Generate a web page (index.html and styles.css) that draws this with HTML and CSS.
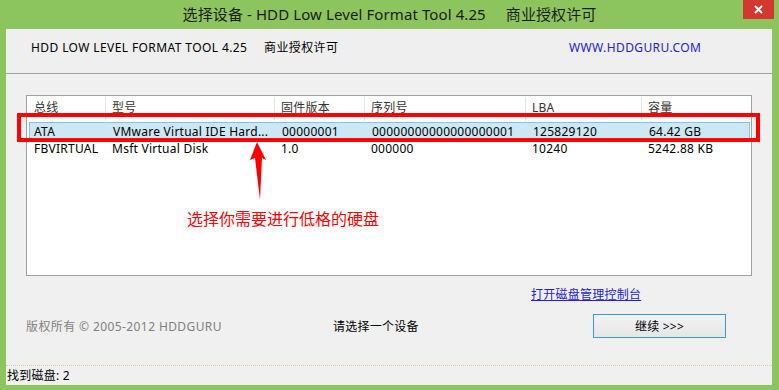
FILE: index.html
```html
<!DOCTYPE html>
<html lang="zh-CN">
<head>
	<meta charset="UTF-8">
	<title>选择设备 - HDD Low Level Format Tool 4.25</title>
	<link rel="stylesheet" href="styles.css">
</head>
<body>
<div class="titlebar">
	<span class="title">选择设备 - HDD Low Level Format Tool 4.25&nbsp;&nbsp;&nbsp;&nbsp;&nbsp;商业授权许可</span>
	<span class="close">
		<svg width="9" height="9" viewBox="0 0 9 9"><path d="M1 1L8 8M8 1L1 8" stroke="#fff" stroke-width="2"/></svg>
	</span>
</div>
<div class="window">
	<div class="header">
		<span>HDD LOW LEVEL FORMAT TOOL 4.25</span>
		<span>商业授权许可</span>
		<a class="site" href="#">WWW.HDDGURU.COM</a>
	</div>
	<div class="main">
		<div class="list">
			<div class="row head">
				<span>总线</span><span>型号</span><span>固件版本</span><span>序列号</span><span>LBA</span><span>容量</span>
			</div>
			<div class="row selected">
				<span>ATA</span><span>VMware Virtual IDE Hard...</span><span>00000001</span><span>00000000000000000001</span><span>125829120</span><span>64.42 GB</span>
			</div>
			<div class="row">
				<span>FBVIRTUAL</span><span>Msft Virtual Disk</span><span>1.0</span><span>000000</span><span>10240</span><span>5242.88 KB</span>
			</div>
		</div>
		<div class="linkrow"><a href="#">打开磁盘管理控制台</a></div>
		<div class="footer">
			<span class="copy">版权所有 © 2005-2012 HDDGURU</span>
			<span>请选择一个设备</span>
			<button class="next">继续 &gt;&gt;&gt;</button>
		</div>
	</div>
	<div class="status">找到磁盘: 2</div>

	<!-- annotation -->
	<div class="mark"></div>
	<svg class="arrow" width="24" height="60" viewBox="0 0 24 60">
		<polygon points="7,1 16,19 12,17 10,59 5,17 0,19" fill="#f00"/>
	</svg>
	<div class="note">选择你需要进行低格的硬盘</div>
</div>
</body>
</html>
```

FILE: styles.css
```css
* {
	margin: 0;
	padding: 0;
	box-sizing: border-box;
}

body {
	width: 779px;
	height: 390px;
	background: #8cc55d;
	font-family: "Noto Sans", "Noto Sans CJK SC", sans-serif;
	font-size: 12px;
	letter-spacing: 0.25px;
	color: #000;
	overflow: hidden;
}

a {
	color: #2222dd;
	text-decoration: none;
}

.titlebar {
	height: 29px;
	display: grid;
	grid-template-columns: 1fr auto 1fr;
}

.title {
	grid-column: 2;
	font-size: 15px;
	letter-spacing: 0.1px;
	line-height: 28px;
	color: #1c1c1c;
	white-space: nowrap;
}

.close {
	grid-column: 3;
	justify-self: end;
	width: 31px;
	height: 19px;
	margin-right: 5px;
	background: #d3382e;
	display: flex;
	align-items: center;
	justify-content: center;
}

.window {
	position: relative;
	margin-left: 6px;
	width: 766px;
	height: 356px;
	background: #f0f0f0;
	display: flex;
	flex-direction: column;
}

.header {
	height: 45px;
	padding: 11px 0 0 25px;
	line-height: 16px;
	letter-spacing: 0.4px;
	background: #efefef;
	border-bottom: 1px solid #a0a0a0;
	display: grid;
	grid-template-columns: 233px 305px auto;
	align-items: start;
}

.main {
	flex: 1;
	padding: 21px 20px 0 20px;
}

.list {
	height: 181px;
	background: #fff;
	border: 1px solid #a0a0a0;
	padding-top: 1px;
}

.row {
	display: grid;
	grid-template-columns: 77px 169px 90px 161px 116px 1fr;
	margin: 0 1px 0 2px;
	height: 18px;
	line-height: 18px;
	white-space: nowrap;
}

.row span {
	padding-left: 6px;
	overflow: hidden;
}

.row span:first-child {
	padding-left: 5px;
}

.row.head {
	height: 24px;
	line-height: 22px;
	color: #333;
	margin-bottom: 1px;
}

.row.head span {
	border-right: 1px solid #e5e5e5;
}

.row.head span:last-child {
	border-right: 0;
}

.row.selected {
	background: #cce8f4;
	border: 1px solid #84c3e3;
}

.row.selected span:first-child {
	padding-left: 4px;
}

.linkrow {
	margin-top: 11px;
	padding-left: 505px;
	line-height: 16px;
}

.linkrow a {
	text-decoration: underline;
}

.footer {
	margin-top: 11px;
	display: grid;
	grid-template-columns: 307px 260px 133px;
	align-items: center;
}

.copy {
	color: #808080;
	letter-spacing: 0.4px;
}

.next {
	height: 24px;
	border: 1px solid #3a9ae0;
	background: linear-gradient(#f2f2f2, #e6e6e6);
	font-family: inherit;
	font-size: 12px;
	letter-spacing: 0.25px;
	color: #000;
}

.status {
	height: 20px;
	border-top: 1px dotted #e6c8a0;
	padding-left: 1px;
	line-height: 19px;
}

.mark {
	position: absolute;
	left: 11px;
	top: 84px;
	width: 743px;
	height: 29px;
	border: 4px solid #f00;
}

.arrow {
	position: absolute;
	left: 244px;
	top: 112px;
}

.note {
	position: absolute;
	left: 181px;
	top: 179px;
	font-size: 16px;
	letter-spacing: 0;
	line-height: 22px;
	color: #f00;
}
```
